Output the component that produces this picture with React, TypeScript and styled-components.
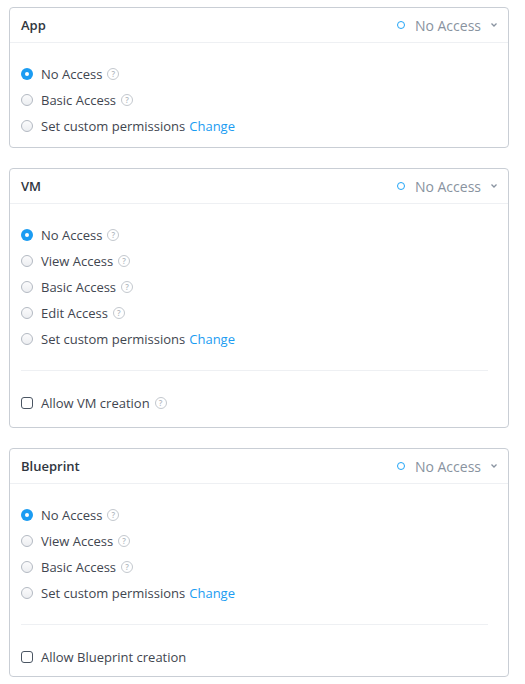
import React from "react";
import styled, { createGlobalStyle } from "styled-components";

const GlobalStyle = createGlobalStyle`
  html, body {
    margin: 0;
    padding: 0;
    background: #ffffff;
  }
  body {
    font-family: "Open Sans", "Liberation Sans", sans-serif;
    color: #3f4650;
    -webkit-font-smoothing: antialiased;
  }
`;

type Option = { label: string; help?: boolean; change?: boolean };

type Section = {
  title: string;
  options: Option[];
  creation?: { label: string; help: boolean };
};

const SECTIONS: Section[] = [
  {
    title: "App",
    options: [
      { label: "No Access", help: true },
      { label: "Basic Access", help: true },
      { label: "Set custom permissions", change: true },
    ],
  },
  {
    title: "VM",
    options: [
      { label: "No Access", help: true },
      { label: "View Access", help: true },
      { label: "Basic Access", help: true },
      { label: "Edit Access", help: true },
      { label: "Set custom permissions", change: true },
    ],
    creation: { label: "Allow VM creation", help: true },
  },
  {
    title: "Blueprint",
    options: [
      { label: "No Access", help: true },
      { label: "View Access", help: true },
      { label: "Basic Access", help: true },
      { label: "Set custom permissions", change: true },
    ],
    creation: { label: "Allow Blueprint creation", help: false },
  },
];

const Page = styled.div`
  display: flex;
  flex-direction: column;
  gap: 20px;
  padding: 7px 0 0 9px;
`;

const Card = styled.section`
  width: 498px;
  border: 1px solid #c9ced5;
  border-radius: 4px;
  background: #fff;
`;

const Header = styled.header`
  height: 34px;
  display: flex;
  align-items: center;
  justify-content: space-between;
  padding: 0 10px 0 11px;
  border-bottom: 1px solid #eef0f3;
`;

const Title = styled.h3`
  margin: 0;
  font-size: 13px;
  font-weight: 600;
  color: #2f3640;
`;

const Status = styled.div`
  display: flex;
  align-items: center;
  font-size: 14px;
  color: #8993a0;
`;

const StatusDot = styled.span`
  width: 6px;
  height: 6px;
  border: 1.5px solid #22a5f7;
  border-radius: 50%;
  margin-right: 10px;
`;

const Chevron = styled.svg`
  margin-left: 9px;
  width: 8px;
  height: 6px;
`;

const Options = styled.div`
  display: flex;
  flex-direction: column;
  padding: 18px 11px 8px;
`;

const Row = styled.label`
  height: 26px;
  display: flex;
  align-items: center;
  font-size: 13px;
  color: #3f4650;
`;

const Radio = styled.span`
  box-sizing: border-box;
  width: 12px;
  height: 12px;
  border-radius: 50%;
  margin-right: 8px;
  flex-shrink: 0;
  background: linear-gradient(#fbfbfc, #eceef1);
  border: 1px solid #b3b9c2;
`;

const CheckedRadio = styled.span`
  box-sizing: border-box;
  width: 12px;
  height: 12px;
  border-radius: 50%;
  margin-right: 8px;
  background: #1b9cf2;
  flex-shrink: 0;
  display: flex;
  align-items: center;
  justify-content: center;
`;

const RadioDot = styled.span`
  width: 4px;
  height: 4px;
  border-radius: 50%;
  background: #fff;
`;

const Checkbox = styled.span`
  box-sizing: border-box;
  width: 12px;
  height: 12px;
  border: 1.5px solid #4a5563;
  border-radius: 3px;
  margin-right: 8px;
  flex-shrink: 0;
`;

const Help = styled.span`
  box-sizing: border-box;
  width: 12px;
  height: 12px;
  margin-left: 5px;
  border: 1px solid #c3c8ce;
  border-radius: 50%;
  color: #b3b9c0;
  font-size: 8px;
  line-height: 10px;
  text-align: center;
  font-weight: 600;
`;

const Change = styled.a`
  margin-left: 4px;
  color: #1b9cf2;
  cursor: pointer;
`;

const Extra = styled.div<{ $padBottom: number }>`
  margin: 10px 20px 0 11px;
  padding: 19px 0 ${({ $padBottom }) => $padBottom}px;
  border-top: 1px solid #eef0f3;
`;

const OptionRow = ({ option, checked }: { option: Option; checked: boolean }) => (
  <Row>
    {checked ? (
      <CheckedRadio>
        <RadioDot />
      </CheckedRadio>
    ) : (
      <Radio />
    )}
    {option.label}
    {option.help && <Help>?</Help>}
    {option.change && <Change>Change</Change>}
  </Row>
);

const PermissionCard = ({ section }: { section: Section }) => (
  <Card>
    <Header>
      <Title>{section.title}</Title>
      <Status>
        <StatusDot />
        No Access
        <Chevron viewBox="0 0 8 6">
          <path d="M1.5 1.5 L4 4 L6.5 1.5" fill="none" stroke="#8993a0" strokeWidth="1.3" />
        </Chevron>
      </Status>
    </Header>
    <Options>
      {section.options.map((o, i) => (
        <OptionRow key={o.label} option={o} checked={i === 0} />
      ))}
    </Options>
    {section.creation && (
      <Extra $padBottom={section.creation.help ? 11 : 6}>
        <Row>
          <Checkbox />
          {section.creation.label}
          {section.creation.help && <Help>?</Help>}
        </Row>
      </Extra>
    )}
  </Card>
);

export default function App() {
  return (
    <>
      <GlobalStyle />
      <Page>
        {SECTIONS.map((s) => (
          <PermissionCard key={s.title} section={s} />
        ))}
      </Page>
    </>
  );
}
